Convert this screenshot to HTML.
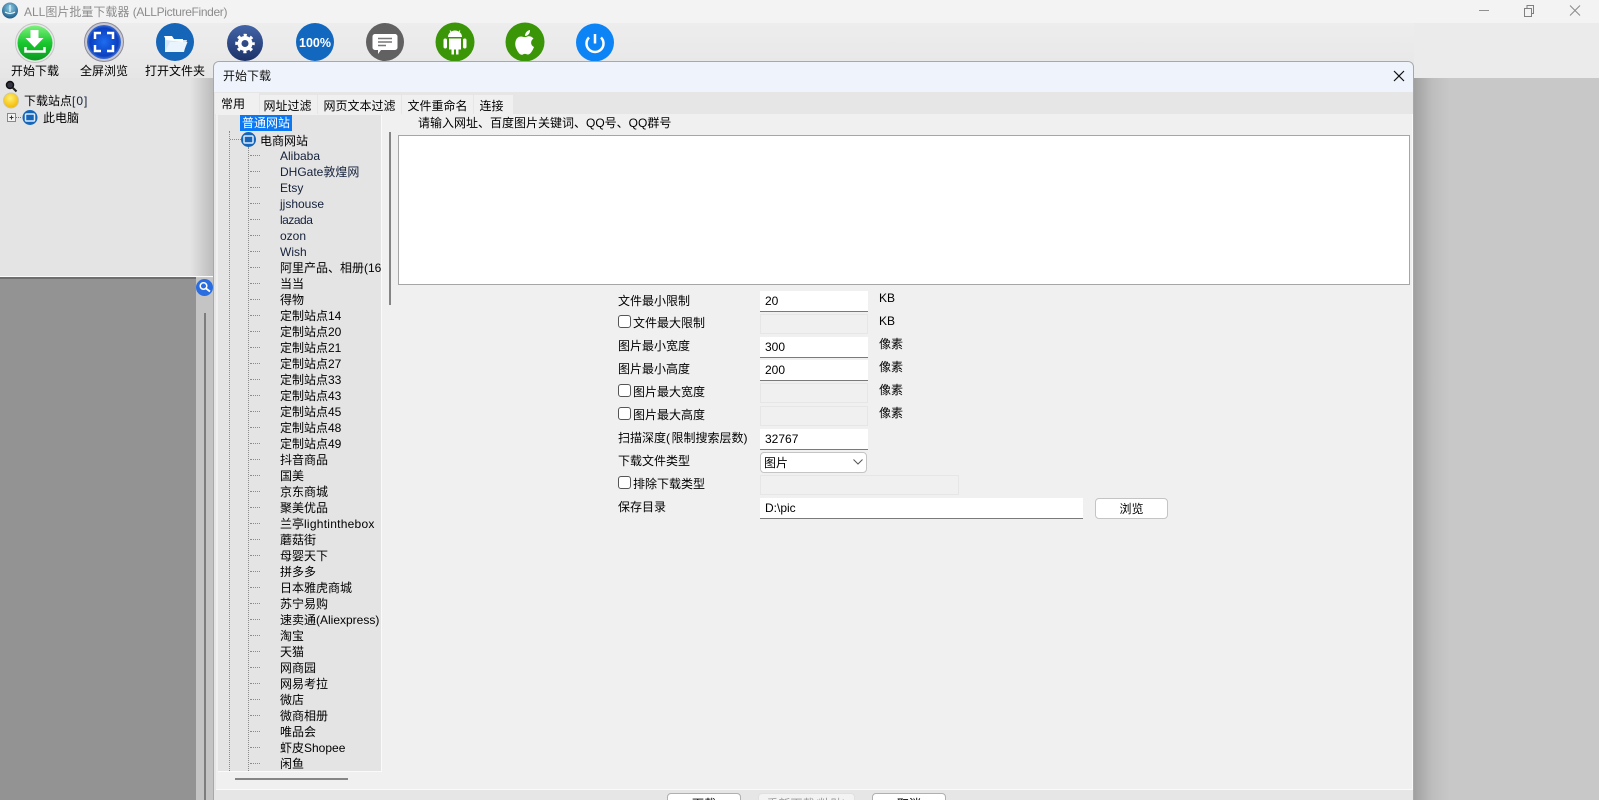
<!DOCTYPE html>
<html lang="zh"><head><meta charset="utf-8"><title>ALL图片批量下载器</title>
<style>
html,body{margin:0;padding:0;width:1599px;height:800px;overflow:hidden;background:#c9c9c9}
body{position:relative;font:12px/16px "Liberation Sans","WenQuanYi Zen Hei","Noto Sans CJK SC",sans-serif;color:#000}
div,span.a,svg{position:absolute}
.t{white-space:nowrap;line-height:16px;height:16px}
.i{background:#fff;border-bottom:1px solid #7a7a7a;left:760px;width:108px;height:20px;line-height:20px;text-indent:5px;box-sizing:content-box}
.d{background:#f0f0f0;border:1px solid #e6e6e6;left:760px;width:106px;height:18px}
.c{width:11px;height:11px;border:1px solid #555;border-radius:3px;background:#fff;left:618px}
.b{background:#fff;border:1px solid #c4c4c4;border-radius:4px;box-sizing:border-box;text-align:center}
.h{left:250px;width:10px;border-top:1px dotted #8a8a8a;height:0}
.r{left:280px}
.e{color:#14203a}
.tab{background:#f0f0f0;top:95px;height:19px;line-height:22px;text-align:center;white-space:nowrap;box-sizing:border-box}
</style></head><body>

<!-- title bar -->
<div style="left:0;top:0;width:1599px;height:23px;background:#f3f3f3"></div>
<svg style="left:2px;top:2px" width="17" height="17" viewBox="0 0 17 17"><defs><radialGradient id="g0" cx=".5" cy=".35" r=".7"><stop offset="0" stop-color="#8fd0e8"/><stop offset="1" stop-color="#14507f"/></radialGradient></defs><circle cx="8" cy="8.500" r="8" fill="url(#g0)"/><path d="M3 10c3 2 7 2 10 0M8 3v7" stroke="#e8f6fb" stroke-width="1.200" fill="none"/></svg>
<div class="t" style="left:24px;top:4px;color:#8c8c8c">ALL图片批量下载器 <span style="letter-spacing:-.35px">(ALLPictureFinder)</span></div>
<svg style="left:1470px;top:0" width="129" height="23" viewBox="0 0 129 23"><path d="M9 10.500H19" stroke="#909090"/><path d="M54.500 8.500h7v8h-7zM57 8V5.500h6.500v8H62" stroke="#808080" fill="none"/><path d="M100 5.500l10 10M110 5.500l-10 10" stroke="#8a8a8a" fill="none"/></svg>

<!-- toolbar -->
<div style="left:0;top:23px;width:1599px;height:55px;background:linear-gradient(#ededed,#e9e9e9 60%,#e6e6e6)"></div>
<svg style="left:0;top:22px" width="640" height="42" viewBox="0 22 640 42">
<defs>
<linearGradient id="g1" x1="0" y1="0" x2="0" y2="1"><stop offset="0" stop-color="#7df07d"/><stop offset=".5" stop-color="#19c72e"/><stop offset="1" stop-color="#0c9a22"/></linearGradient>
<radialGradient id="g2" cx=".5" cy=".5" r=".55"><stop offset="0" stop-color="#1e6cf0"/><stop offset=".75" stop-color="#0a3fc0"/><stop offset="1" stop-color="#5b8ae0"/></radialGradient>
<linearGradient id="g3" x1="0" y1="0" x2="0" y2="1"><stop offset="0" stop-color="#4264a8"/><stop offset="1" stop-color="#1c3268"/></linearGradient>
</defs>
<circle cx="35" cy="43" r="19.500" fill="#e8e8e8" stroke="#c4c4c4"/><circle cx="35" cy="43" r="17.500" fill="url(#g1)"/>
<path d="M30.500 30h8v8h5l-9 9.500-9-9.500h5z" fill="#fff"/><path d="M25.500 47v4.500h19V47" fill="none" stroke="#fff" stroke-width="2.500"/>
<circle cx="104" cy="42" r="19.500" fill="#c8c8d2" stroke="#8a8a9a"/><circle cx="104" cy="42" r="17" fill="url(#g2)"/>
<path d="M98 39v-6h6M110 33h6v6M116 45v6h-6M104 51h-6v-6" transform="translate(-3 0)" fill="none" stroke="#fff" stroke-width="2.500"/>
<circle cx="175" cy="42" r="19" fill="#1565b8"/><path d="M165 37v15h19l3-12h-15l-2-3z" fill="#d6e8f8"/><path d="M166 40l-2-4h8l2 3h9v3" fill="#fff"/><path d="M170 42h17.500l-4 10H165z" fill="#eaf4fc"/>
<circle cx="245" cy="43" r="18" fill="url(#g3)"/>
<circle cx="245" cy="43.500" r="5.500" fill="none" stroke="#fff" stroke-width="4"/><circle cx="245" cy="43.500" r="8" fill="none" stroke="#fff" stroke-width="3.500" stroke-dasharray="3 3.280" stroke-dashoffset="1.500"/>
<circle cx="315" cy="42" r="19" fill="#1268bf"/><text x="315" y="47" text-anchor="middle" fill="#fff" font-family="Liberation Sans" font-weight="700" font-size="12.500">100%</text>
<circle cx="385" cy="42" r="19" fill="#616161"/><path d="M375 34h20a2.500 2.500 0 0 1 2.500 2.500v11a2.500 2.500 0 0 1-2.500 2.500h-14l-3 4v-4h-3a2.500 2.500 0 0 1-2.500-2.500v-11a2.500 2.500 0 0 1 2.500-2.500z" fill="#fff"/><path d="M378 38.500h14M378 42h14M378 45.500h8" stroke="#777" stroke-width="1.500"/>
<circle cx="455" cy="42" r="19.500" fill="#3b9607"/><path d="M448 37a7 6.500 0 0 1 14 0z" fill="#fff"/><path d="M449 38.500h12v11h-2.500v5h-2.500v-5h-2v5h-2.500v-5H449z" fill="#fff"/><rect x="443.500" y="38.500" width="3.500" height="10" rx="1.700" fill="#fff"/><rect x="463" y="38.500" width="3.500" height="10" rx="1.700" fill="#fff"/><path d="M450 30.500l2 3M460 30.500l-2 3" stroke="#fff"/>
<circle cx="525" cy="42" r="19.500" fill="#3b9607"/><path d="M526 37c2-1 5-1.500 7.500 1.500-3.500 2.500-3 7 .5 8.500-1.500 4-4 8-6.500 7.500-2-.5-3-1-4.500 0-3 1.500-5.500-3-7-6.500-2-6 .5-11.500 5-11.500 2 0 3 1 5 .5z" fill="#fff"/><path d="M525 36c0-3 2-5.500 5-6 .3 3-2 6-5 6z" fill="#fff"/>
<circle cx="595" cy="42.500" r="19" fill="#0d84f5"/><path d="M589 37.500a8.500 8.500 0 1 0 12 0" fill="none" stroke="#fff" stroke-width="2.500"/><path d="M595 34v9.500" stroke="#fff" stroke-width="2.500"/>
</svg>
<div class="t" style="left:11px;top:63px">开始下载</div>
<div class="t" style="left:80px;top:63px">全屏浏览</div>
<div class="t" style="left:145px;top:63px">打开文件夹</div>

<!-- left tree panel -->
<div style="left:0;top:78px;width:213px;height:199px;background:#e4e4e4"></div>
<div style="left:190px;top:78px;width:23px;height:199px;background:linear-gradient(90deg,#e4e4e4,#bcbcbc)"></div>
<svg style="left:4px;top:80px" width="14" height="13" viewBox="0 0 14 13"><circle cx="6" cy="5" r="3.500" fill="#334" stroke="#111" stroke-width="1.500"/><path d="M8.500 7.500l4 4" stroke="#222" stroke-width="2"/></svg>
<svg style="left:3px;top:92px" width="17" height="17" viewBox="0 0 17 17"><defs><radialGradient id="g4" cx=".45" cy=".35" r=".65"><stop offset="0" stop-color="#ffef70"/><stop offset="1" stop-color="#f4b800"/></radialGradient></defs><circle cx="8" cy="8.500" r="7.500" fill="url(#g4)" stroke="#cfc9a0"/></svg>
<div class="t" style="left:24px;top:93px">下载站点<span style="letter-spacing:1px;color:#14203a">[0]</span></div>
<svg style="left:6px;top:109px" width="34" height="17" viewBox="0 0 34 17"><rect x="1.500" y="4.500" width="8" height="8" fill="#f3f3f3" stroke="#888"/><path d="M3.500 8.500h4M5.500 6.500v4" stroke="#333"/><path d="M10 8.500h6" stroke="#777" stroke-dasharray="1 1"/><circle cx="24" cy="8.500" r="7.500" fill="#1565b8"/><rect x="19.500" y="5" width="9" height="7" rx="1" fill="none" stroke="#dcecff" stroke-width="1.500"/></svg>
<div class="t" style="left:43px;top:110px">此电脑</div>

<!-- lower left -->
<div style="left:0;top:277px;width:196px;height:523px;background:#939393;border-top:2px solid #6e6e6e;box-sizing:border-box"></div>
<div style="left:0;top:276px;width:213px;height:1px;background:#fafafa"></div>
<div style="left:196px;top:278px;width:17px;height:522px;background:#c4c4c4"></div>
<div style="left:204px;top:313px;width:2px;height:487px;background:#7d7d7d"></div>
<svg style="left:196px;top:279px" width="17" height="17" viewBox="0 0 17 17"><circle cx="8.500" cy="8.500" r="8.500" fill="#2a6de0"/><circle cx="7.500" cy="7" r="3.300" fill="none" stroke="#fff" stroke-width="1.500"/><path d="M10 9.500l4 3" stroke="#fff" stroke-width="1.800"/></svg>

<!-- right backdrop -->
<div style="left:1414px;top:23px;width:185px;height:55px;background:#ebebeb"></div>
<div style="left:1414px;top:78px;width:185px;height:722px;background:#c8c8c8"></div>
<div style="left:1414px;top:78px;width:36px;height:722px;background:linear-gradient(90deg,#a0a0a0,#bdbdbd 50%,#c8c8c8)"></div>

<!-- dialog -->
<div style="left:213px;top:61px;width:1201px;height:739px;background:#e6e6e6;border:1px solid #a8a8a8;border-bottom:0;border-radius:6px 6px 0 0;box-sizing:border-box;overflow:hidden"></div>
<div style="left:214px;top:62px;width:1199px;height:30px;background:#eef3fc;border-radius:5px 5px 0 0"></div>
<div class="t" style="left:223px;top:68px;color:#111">开始下载</div>
<svg style="left:1392px;top:69px" width="14" height="14" viewBox="0 0 14 14"><path d="M2 2l10 10M12 2L2 12" stroke="#111" stroke-width="1.200"/></svg>

<div style="left:216px;top:114px;width:1196px;height:675px;background:#f0f0f0;border-right:1px solid #fafafa;border-bottom:1px solid #fafafa"></div>
<div class="tab" style="left:215px;top:93px;width:44px;height:21px;padding-right:8px">常用</div>
<div class="tab" style="left:260px;width:57px;padding-right:2px">网址过滤</div>
<div class="tab" style="left:318px;width:83px">网页文本过滤</div>
<div class="tab" style="left:402px;width:71px">文件重命名</div>
<div class="tab" style="left:474px;width:39px;padding-right:4px">连接</div>

<!-- site tree -->
<div style="left:218px;top:115px;width:163px;height:656px;background:#e4e4e4;border-right:1px solid #fafafa;border-bottom:1px solid #fafafa"></div>
<div style="left:229px;top:131px;height:640px;border-left:1px dotted #8a8a8a"></div>
<div style="left:248px;top:147px;height:624px;border-left:1px dotted #8a8a8a"></div>
<div style="left:230px;top:139px;width:11px;border-top:1px dotted #8a8a8a"></div>
<div class="t" style="left:240px;top:115px;width:52px;height:16px;background:#0a78f5;color:#fff;text-align:center">普通网站</div>
<svg style="left:241px;top:132px" width="15" height="15" viewBox="0 0 15 15"><circle cx="7.500" cy="7.500" r="7.500" fill="#1565b8"/><rect x="3" y="4" width="9" height="7" rx="1" fill="none" stroke="#dcecff" stroke-width="1.500"/></svg>
<div class="t" style="left:260px;top:133px">电商网站</div>

<div style="left:0;top:0;width:381px;height:771px;overflow:hidden">
<div class="h" style="top:155px"></div><div class="t r e" style="top:148px">Alibaba</div>
<div class="h" style="top:171px"></div><div class="t r e" style="top:164px">DHGate敦煌网</div>
<div class="h" style="top:187px"></div><div class="t r e" style="top:180px">Etsy</div>
<div class="h" style="top:203px"></div><div class="t r e" style="top:196px">jjshouse</div>
<div class="h" style="top:219px"></div><div class="t r e" style="top:212px;letter-spacing:-.5px">lazada</div>
<div class="h" style="top:235px"></div><div class="t r e" style="top:228px">ozon</div>
<div class="h" style="top:251px"></div><div class="t r e" style="top:244px">Wish</div>
<div class="h" style="top:267px"></div><div class="t r" style="top:260px">阿里产品、相册(16</div>
<div class="h" style="top:283px"></div><div class="t r" style="top:276px">当当</div>
<div class="h" style="top:299px"></div><div class="t r" style="top:292px">得物</div>
<div class="h" style="top:315px"></div><div class="t r" style="top:308px">定制站点14</div>
<div class="h" style="top:331px"></div><div class="t r" style="top:324px">定制站点20</div>
<div class="h" style="top:347px"></div><div class="t r" style="top:340px">定制站点21</div>
<div class="h" style="top:363px"></div><div class="t r" style="top:356px">定制站点27</div>
<div class="h" style="top:379px"></div><div class="t r" style="top:372px">定制站点33</div>
<div class="h" style="top:395px"></div><div class="t r" style="top:388px">定制站点43</div>
<div class="h" style="top:411px"></div><div class="t r" style="top:404px">定制站点45</div>
<div class="h" style="top:427px"></div><div class="t r" style="top:420px">定制站点48</div>
<div class="h" style="top:443px"></div><div class="t r" style="top:436px">定制站点49</div>
<div class="h" style="top:459px"></div><div class="t r" style="top:452px">抖音商品</div>
<div class="h" style="top:475px"></div><div class="t r" style="top:468px">国美</div>
<div class="h" style="top:491px"></div><div class="t r" style="top:484px">京东商城</div>
<div class="h" style="top:507px"></div><div class="t r" style="top:500px">聚美优品</div>
<div class="h" style="top:523px"></div><div class="t r" style="top:516px">兰亭<span style="letter-spacing:.25px">lightinthebox</span></div>
<div class="h" style="top:539px"></div><div class="t r" style="top:532px">蘑菇街</div>
<div class="h" style="top:555px"></div><div class="t r" style="top:548px">母婴天下</div>
<div class="h" style="top:571px"></div><div class="t r" style="top:564px">拼多多</div>
<div class="h" style="top:587px"></div><div class="t r" style="top:580px">日本雅虎商城</div>
<div class="h" style="top:603px"></div><div class="t r" style="top:596px">苏宁易购</div>
<div class="h" style="top:619px"></div><div class="t r" style="top:612px">速卖通(Aliexpress)</div>
<div class="h" style="top:635px"></div><div class="t r" style="top:628px">淘宝</div>
<div class="h" style="top:651px"></div><div class="t r" style="top:644px">天猫</div>
<div class="h" style="top:667px"></div><div class="t r" style="top:660px">网商园</div>
<div class="h" style="top:683px"></div><div class="t r" style="top:676px">网易考拉</div>
<div class="h" style="top:699px"></div><div class="t r" style="top:692px">微店</div>
<div class="h" style="top:715px"></div><div class="t r" style="top:708px">微商相册</div>
<div class="h" style="top:731px"></div><div class="t r" style="top:724px">唯品会</div>
<div class="h" style="top:747px"></div><div class="t r" style="top:740px">虾皮Shopee</div>
<div class="h" style="top:763px"></div><div class="t r" style="top:756px">闲鱼</div>
</div>
<div style="left:235px;top:778px;width:113px;height:2px;background:#858585"></div>
<div style="left:389px;top:132px;width:2px;height:173px;background:#858585"></div>

<!-- url box -->
<div class="t" style="left:418px;top:115px">请输入网址、百度图片关键词、QQ号、QQ群号</div>
<div style="left:398px;top:135px;width:1010px;height:148px;background:#fff;border:1px solid #a6a6a6"></div>

<!-- form -->
<div class="t" style="left:618px;top:293px">文件最小限制</div>
<div class="i" style="top:291px">20</div><div class="t" style="left:879px;top:290px">KB</div>
<div class="c" style="top:315px"></div><div class="t" style="left:633px;top:315px">文件最大限制</div>
<div class="d" style="top:314px"></div><div class="t" style="left:879px;top:313px">KB</div>
<div class="t" style="left:618px;top:338px">图片最小宽度</div>
<div class="i" style="top:337px">300</div><div class="t" style="left:879px;top:336px">像素</div>
<div class="t" style="left:618px;top:361px">图片最小高度</div>
<div class="i" style="top:360px">200</div><div class="t" style="left:879px;top:359px">像素</div>
<div class="c" style="top:384px"></div><div class="t" style="left:633px;top:384px">图片最大宽度</div>
<div class="d" style="top:383px"></div><div class="t" style="left:879px;top:382px">像素</div>
<div class="c" style="top:407px"></div><div class="t" style="left:633px;top:407px">图片最大高度</div>
<div class="d" style="top:406px"></div><div class="t" style="left:879px;top:405px">像素</div>
<div class="t" style="left:618px;top:430px">扫描深度<span style="letter-spacing:1.500px">(</span>限制搜索层数<span style="letter-spacing:1.500px">)</span></div>
<div class="i" style="top:429px">32767</div>
<div class="t" style="left:618px;top:453px">下载文件类型</div>
<div class="b" style="left:760px;top:452px;width:107px;height:21px;text-align:left;padding-left:3px;line-height:21px">图片</div>
<svg style="left:853px;top:459px" width="10" height="6" viewBox="0 0 10 6"><path d="M.5.500L5 5 9.500.500" fill="none" stroke="#555"/></svg>
<div class="c" style="top:476px"></div><div class="t" style="left:633px;top:476px">排除下载类型</div>
<div class="d" style="top:475px;width:197px"></div>
<div class="t" style="left:618px;top:499px">保存目录</div>
<div class="i" style="top:498px;width:323px">D:\pic</div>
<div class="b" style="left:1095px;top:498px;width:73px;height:21px;line-height:20px">浏览</div>

<!-- footer -->
<div style="left:214px;top:790px;width:1199px;height:10px;background:#e6e6e6"></div>
<div class="b" style="left:667px;top:793px;width:74px;height:24px;line-height:20px;border-color:#b0b0b0">下载</div>
<div class="b" style="left:758px;top:793px;width:97px;height:24px;line-height:20px;background:#f3f3f3;color:#999;border-color:#e0e0e0">重新下载(粘贴)</div>
<div class="b" style="left:872px;top:793px;width:74px;height:24px;line-height:20px;border-color:#b0b0b0">取消</div>
</body></html>
